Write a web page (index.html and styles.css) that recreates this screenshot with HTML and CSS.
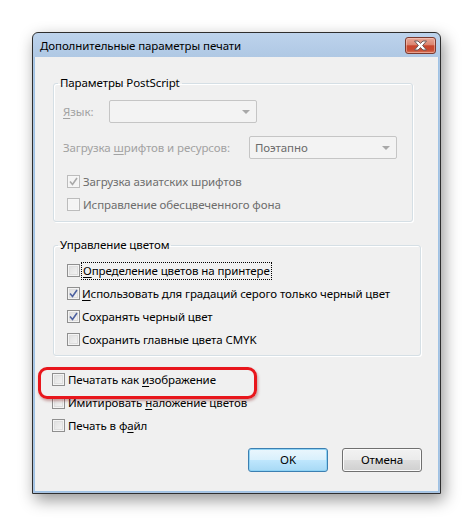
FILE: index.html
```html
<!DOCTYPE html>
<html lang="ru">
<head>
<meta charset="utf-8">
<title>Дополнительные параметры печати</title>
<link rel="stylesheet" href="styles.css">
</head>
<body>
<div class="stage">
  <div class="window">
    <div class="titlebar">
      <span class="title">Дополнительные параметры печати</span>
      <span class="close">
        <svg width="15" height="11" viewBox="0 0 15 11"><path d="M1.5 1 H5 L7.5 3.4 L10 1 H13.5 L9.6 5.5 L13.5 10 H10 L7.5 7.6 L5 10 H1.5 L5.4 5.5 Z" fill="#ffffff" stroke="#6b5a58" stroke-width="1" stroke-linejoin="round"/></svg>
      </span>
    </div>
    <div class="client">
      <fieldset class="group g1">
        <legend>Параметры PostScript</legend>
        <div class="field-row first">
          <span class="lbl lbl-lang"><u>Я</u>зык:</span>
          <span class="combo combo-lang"><span class="val"></span><span class="arrow"></span></span>
        </div>
        <div class="field-row second">
          <span class="lbl lbl-load">Загрузка <u>ш</u>рифтов и ресурсов:</span>
          <span class="combo combo-load"><span class="val">Поэтапно</span><span class="arrow"></span></span>
        </div>
        <div class="check dis checked first-check">
          <span class="box"><svg width="9" height="9" viewBox="0 0 9 9"><path d="M1 4.5 L3.5 7.5 L8 1" fill="none" stroke="#a9a9a9" stroke-width="1.6"/></svg></span>
          <span class="text">Загрузка азиатских шрифтов</span>
        </div>
        <div class="check dis">
          <span class="box"></span>
          <span class="text">Исправление обесцвеченного фона</span>
        </div>
      </fieldset>

      <fieldset class="group g2">
        <legend>Управление цветом</legend>
        <div class="check in-g2 first-check2">
          <span class="box"></span>
          <span class="text focus"><u>О</u>пределение цветов на принтере</span>
        </div>
        <div class="check in-g2 checked">
          <span class="box"><svg width="9" height="9" viewBox="0 0 9 9"><path d="M1 4.5 L3.5 7.5 L8 1" fill="none" stroke="#4d61a0" stroke-width="1.6"/></svg></span>
          <span class="text"><u>И</u>спользовать для градаций серого только черный цвет</span>
        </div>
        <div class="check in-g2 checked">
          <span class="box"><svg width="9" height="9" viewBox="0 0 9 9"><path d="M1 4.5 L3.5 7.5 L8 1" fill="none" stroke="#4d61a0" stroke-width="1.6"/></svg></span>
          <span class="text">Сохранять черный цвет</span>
        </div>
        <div class="check in-g2">
          <span class="box"></span>
          <span class="text">Сохранить главные цвета CMYK</span>
        </div>
      </fieldset>

      <div class="options">
        <div class="check outer highlighted">
          <span class="box"></span>
          <span class="text">Печатать как <u>и</u>зображение</span>
        </div>
        <div class="check outer">
          <span class="box"></span>
          <span class="text">Имитировать <u>н</u>аложение цветов</span>
        </div>
        <div class="check outer">
          <span class="box"></span>
          <span class="text">Печать в ф<u>а</u>йл</span>
        </div>
      </div>

      <div class="buttons">
        <span class="btn btn-default">OK</span>
        <span class="btn">Отмена</span>
      </div>
    </div>
  </div>
</div>
</body>
</html>
```

FILE: styles.css
```css
* { box-sizing: border-box; }

html, body {
  margin: 0;
  padding: 0;
  background: #ffffff;
}

body {
  font-family: "Noto Sans", "Open Sans", sans-serif;
  font-size: 11.5px;
  letter-spacing: -0.1px;
  color: #000;
}

.stage {
  padding: 32px 0 0 32px;
  width: 473px;
  height: 527px;
  overflow: hidden;
}

.window {
  width: 409px;
  height: 462px;
  border: 1px solid #2e2e2e;
  border-radius: 6px 6px 0 0;
  background: linear-gradient(#bdd3ec, #afc8e4 24px, #aac4e2);
  padding: 0 1px 1px 1px;
  box-shadow: 3px 6px 16px rgba(0, 0, 0, 0.42);
  display: flex;
  flex-direction: column;
}

.titlebar {
  height: 24px;
  display: flex;
  align-items: center;
  justify-content: space-between;
  padding: 0 3px 0 6px;
  flex: none;
}

.title {
  line-height: 16px;
  color: #000;
  margin-top: 1px;
}

.close {
  width: 31px;
  height: 17px;
  margin-top: 1px;
  border: 1px solid #7b3a2f;
  border-radius: 3px;
  background: linear-gradient(#e8a797 0%, #db8570 45%, #c9462d 52%, #c84a31 80%, #d9785b 100%);
  box-shadow: inset 0 0 0 1px rgba(255, 220, 210, 0.45);
  display: flex;
  align-items: center;
  justify-content: center;
}

.close svg { display: block; }

.client {
  flex: 1;
  background: #f0f0f0;
  border: 1px solid #9fc2e4;
  border-top: none;
  padding: 18px 0 0 17px;
  display: flex;
  flex-direction: column;
}

.group {
  margin: 0 0 0 1px;
  padding: 0;
  border: 1px solid #d5dfe5;
  border-radius: 3px;
  box-shadow: 1px 1px 0 #ffffff, inset 1px 1px 0 #ffffff;
  min-width: 0;
}

.group legend {
  margin-left: 4px;
  padding: 0 2px;
  line-height: 16px;
}

.g1 { width: 360px; padding-bottom: 5px; }
.g2 { width: 368px; margin-top: 15px; padding-bottom: 4px; }

.field-row {
  display: flex;
  align-items: center;
  height: 23px;
  padding-left: 9px;
}

.field-row.first { margin-top: 9px; }
.field-row.second { margin-top: 13px; }

.lbl { color: #a2a2a2; }
.lbl u { text-decoration-thickness: 1px; text-underline-offset: 2px; }
.lbl-lang { width: 46px; }
.lbl-load { width: 186px; }

.combo {
  height: 23px;
  border: 1px solid #c5c5c5;
  border-radius: 2px;
  background: #f3f3f3;
  display: flex;
  align-items: center;
  justify-content: space-between;
  padding: 0 6px 0 5px;
}

.combo-lang { width: 148px; }
.combo-load { width: 148px; }

.combo .val { color: #6b6b6b; }

.combo .arrow {
  width: 0;
  height: 0;
  border-left: 4px solid transparent;
  border-right: 4px solid transparent;
  border-top: 4px solid #a8a8a8;
}

.check {
  display: flex;
  align-items: center;
  height: 23px;
  padding-left: 13px;
}

.check.first-check { margin-top: 11px; }
.check.first-check2 { margin-top: 6px; }

.box {
  width: 13px;
  height: 13px;
  flex: none;
  border: 1px solid #8f8f8f;
  background: linear-gradient(135deg, #dcdcdc, #f7f7f7);
  box-shadow: inset 0 0 0 1px #f4f4f4, inset 0 0 0 2px #dedede;
  display: flex;
  align-items: center;
  justify-content: center;
}

.box svg { display: block; }

.check .text {
  margin-left: 3px;
  line-height: 16px;
  white-space: nowrap;
}

.check u { text-decoration-thickness: 1px; text-underline-offset: 2px; }

.check.in-g2 .text { margin-left: 2px; }

.check.dis .text { color: #6d6d6d; }
.check.dis .box {
  border-color: #bcbcbc;
  background: #f4f4f4;
  box-shadow: inset 0 0 0 1px #f6f6f6;
}

.text.focus {
  outline: 1px dotted #000;
  outline-offset: 0;
  padding: 0 1px;
}

.options {
  margin-top: 12px;
  display: flex;
  flex-direction: column;
}

.check.outer { padding-left: 0; }

.highlighted { position: relative; }

.highlighted::before {
  content: "";
  position: absolute;
  left: -14px;
  top: -1px;
  width: 213px;
  height: 26px;
  border: 3px solid #e8161c;
  border-radius: 9px;
  box-shadow: 1px 2px 3px rgba(120, 0, 0, 0.35);
  pointer-events: none;
}

.buttons {
  margin-top: 11px;
  display: flex;
  justify-content: flex-end;
  gap: 14px;
  padding-right: 16px;
}

.btn {
  width: 80px;
  height: 24px;
  border: 1px solid #707070;
  border-radius: 3px;
  background: linear-gradient(#f2f2f2 0%, #ebebeb 48%, #dddddd 52%, #cfcfcf 100%);
  box-shadow: inset 0 0 0 1px #fbfbfb;
  display: flex;
  align-items: center;
  justify-content: center;
  line-height: 16px;
}

.btn-default {
  border-color: #3c7fb1;
  background: linear-gradient(#eaf6fd 0%, #d9f0fc 48%, #bee6fd 52%, #a7d9f5 100%);
  box-shadow: inset 0 0 0 1px #8fd3f5;
}
```
